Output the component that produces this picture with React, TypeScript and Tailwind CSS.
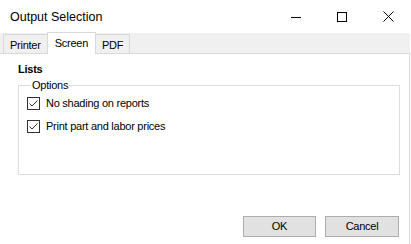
import React from "react";

const Check = () => (
  <svg width="13" height="13" viewBox="0 0 13 13" className="shrink-0">
    <rect x="0.5" y="0.5" width="12" height="12" fill="#fff" stroke="#333" />
    <polyline points="2.5,6.5 5,9 10.5,3.5" fill="none" stroke="#333" strokeWidth="1" />
  </svg>
);

const CaptionButtons = () => (
  <div className="flex h-full">
    <div className="w-[46px] flex items-center justify-center">
      <svg width="10" height="10" viewBox="0 0 10 10">
        <line x1="0" y1="5.5" x2="10" y2="5.5" stroke="#000" />
      </svg>
    </div>
    <div className="w-[46px] flex items-center justify-center">
      <svg width="10" height="10" viewBox="0 0 10 10">
        <rect x="0.5" y="0.5" width="9" height="9" fill="none" stroke="#000" />
      </svg>
    </div>
    <div className="w-[46px] flex items-center justify-center">
      <svg width="11" height="11" viewBox="0 0 11 11">
        <path d="M0.5 0.5 L10.5 10.5 M10.5 0.5 L0.5 10.5" stroke="#000" strokeWidth="1" />
      </svg>
    </div>
  </div>
);

export default function App() {
  const tabs = ["Printer", "Screen", "PDF"];
  return (
    <div className="w-[411px] h-[244px] bg-white flex flex-col font-['Liberation_Sans',Arial,sans-serif] text-black overflow-hidden">
      {/* title bar */}
      <div className="h-[33px] flex items-center justify-between shrink-0">
        <span className="pl-[10px] text-[12.5px] pt-[1px]">Output Selection</span>
        <CaptionButtons />
      </div>

      {/* tab strip */}
      <div className="h-[21px] shrink-0 flex items-end bg-[#f0f0f0] pl-[3px] w-[410px] border-b border-[#d9d9d9] tracking-[-0.25px]">
        {tabs.map((t) =>
          t === "Screen" ? (
            <div
              key={t}
              className="h-[22px] -mb-px px-[7px] flex items-center bg-white border border-b-0 border-[#d9d9d9] text-[11px] -mx-px relative z-10"
            >
              {t}
            </div>
          ) : (
            <div
              key={t}
              className="h-[19px] px-[6px] flex items-center border border-b-0 border-[#d9d9d9] bg-[#f0f0f0] text-[11px] pt-[2px]"
            >
              {t}
            </div>
          )
        )}
      </div>

      {/* tab page */}
      <div className="flex-1 w-[410px] border-r border-[#d9d9d9] flex flex-col text-[11px] tracking-[-0.25px]">
        <div className="pl-[18px] pt-[9px] leading-[13px] font-bold">Lists</div>
        <fieldset className="mt-[3px] ml-[18px] w-[382px] border border-[#dcdcdc] px-[8px] pb-[41px]">
          <legend className="ml-[4px] px-[1px] leading-[13px]">Options</legend>
          <div className="flex flex-col gap-[10px] pt-[5px]">
            <label className="flex items-center gap-[6px] h-[13px]">
              <Check />
              <span>No shading on reports</span>
            </label>
            <label className="flex items-center gap-[6px] h-[13px]">
              <Check />
              <span>Print part and labor prices</span>
            </label>
          </div>
        </fieldset>
        <div className="mt-[41px] flex justify-end gap-[9px] pr-[10px]">
          <button className="w-[73px] h-[21px] bg-[#e1e1e1] border border-[#adadad] text-[11px]">OK</button>
          <button className="w-[74px] h-[21px] bg-[#e1e1e1] border border-[#adadad] text-[11px]">Cancel</button>
        </div>
      </div>
    </div>
  );
}
